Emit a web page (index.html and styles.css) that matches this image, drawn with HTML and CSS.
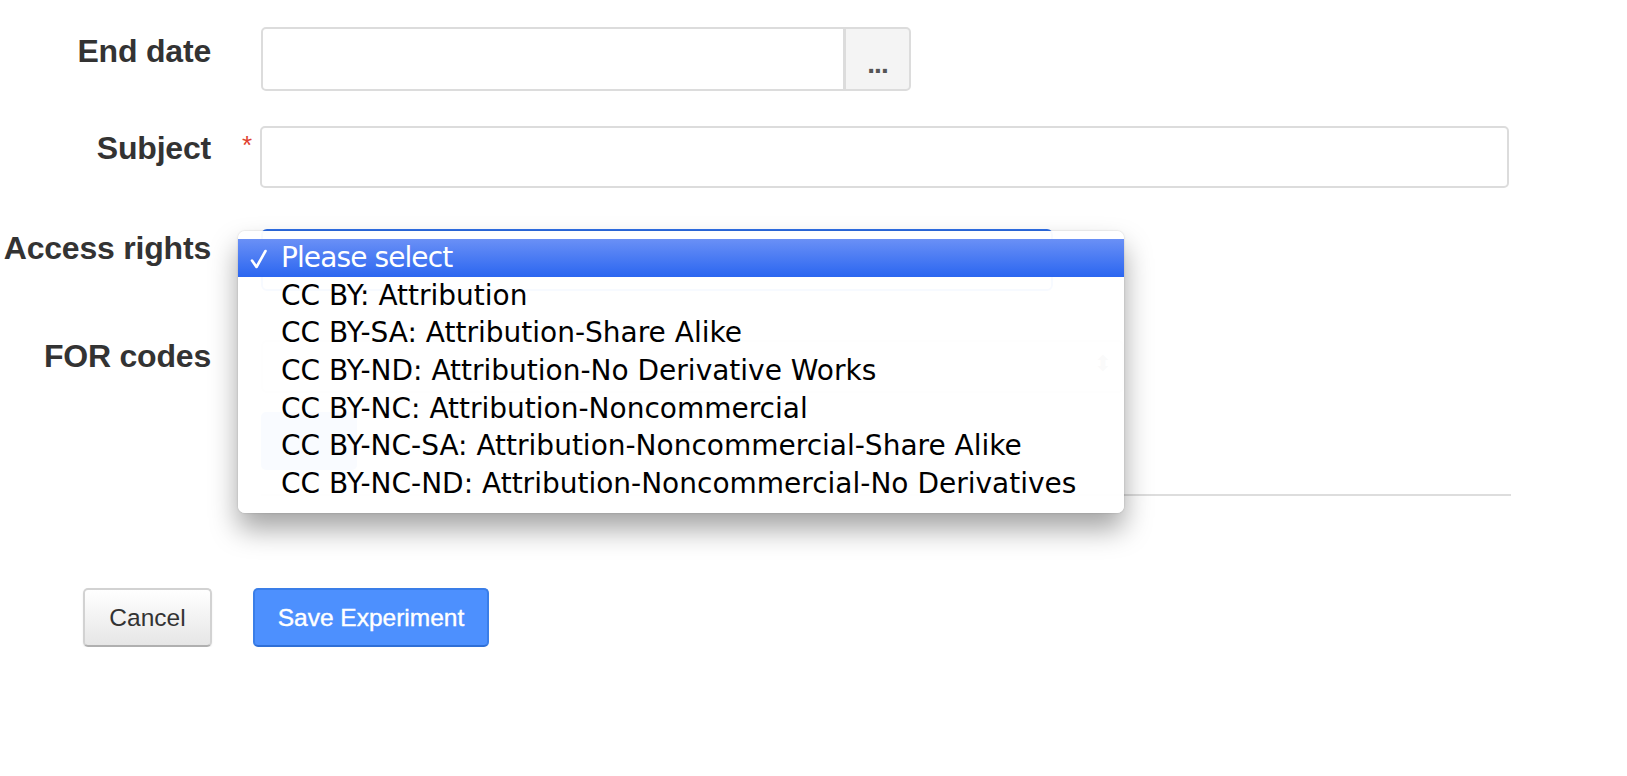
FILE: index.html
```html
<!DOCTYPE html>
<html lang="en">
<head>
<meta charset="utf-8">
<title>Experiment form</title>
<link rel="stylesheet" href="styles.css">
</head>
<body>
<form class="form">
  <div class="row row-end">
    <label class="label">End date</label>
    <span class="req"></span>
    <div class="input-group">
      <div class="input"></div>
      <span class="addon">...</span>
    </div>
  </div>

  <div class="row row-subject">
    <label class="label">Subject</label>
    <span class="req">*</span>
    <div class="input input-wide"></div>
  </div>

  <div class="row row-access">
    <label class="label">Access rights</label>
    <span class="req"></span>
    <div class="select select-focus"></div>
    <div class="menu">
      <div class="menu-item selected"><svg class="check" width="18" height="22" viewBox="0 0 18 22"><path d="M2 12.5 L6.5 19 L15.5 3" fill="none" stroke="#ffffff" stroke-width="2.6" stroke-linecap="round" stroke-linejoin="round"/></svg><span class="sel-text">Please select</span></div>
      <div class="menu-item">CC BY: Attribution</div>
      <div class="menu-item">CC BY-SA: Attribution-Share Alike</div>
      <div class="menu-item">CC BY-ND: Attribution-No Derivative Works</div>
      <div class="menu-item">CC BY-NC: Attribution-Noncommercial</div>
      <div class="menu-item">CC BY-NC-SA: Attribution-Noncommercial-Share Alike</div>
      <div class="menu-item">CC BY-NC-ND: Attribution-Noncommercial-No Derivatives</div>
    </div>
  </div>

  <div class="row row-for">
    <label class="label">FOR codes</label>
    <span class="req"></span>
    <div class="select select-for"><span class="arrows">⬍</span></div>
  </div>

  <div class="row row-add">
    <span></span>
    <span></span>
    <div class="add-btn"></div>
  </div>

  <div class="row row-rule">
    <span></span>
    <span></span>
    <div class="rule"></div>
  </div>

  <div class="actions">
    <button type="button" class="btn btn-cancel">Cancel</button>
    <button type="button" class="btn btn-save">Save Experiment</button>
  </div>
</form>
</body>
</html>
```
FILE: styles.css
```css
html, body {
  margin: 0;
  padding: 0;
  background: #ffffff;
}

body {
  font-family: "Liberation Sans", Arial, sans-serif;
  color: #333333;
}

.form {
  padding-top: 27px;
}

.row {
  display: grid;
  grid-template-columns: 211px 50px 1250px;
  align-items: start;
  position: relative;
}

.label {
  font-size: 32px;
  font-weight: bold;
  line-height: 40px;
  text-align: right;
  color: #333333;
  letter-spacing: -0.2px;
}

.req {
  color: #e0412f;
  font-size: 26px;
  line-height: 26px;
  padding-left: 31px;
  padding-top: 6px;
}

.row-end { margin-bottom: 35px; }
.row-end .label { padding-top: 4px; }

.row-subject { margin-bottom: 41px; }
.row-subject .label { padding-top: 2px; }

.row-access { margin-bottom: 49px; }
.row-access .label { margin-top: -1px; }

.row-for { margin-bottom: 19px; }
.row-for .label { margin-top: -4px; }

.row-add { margin-bottom: 24px; }

.input-group {
  display: flex;
  width: 650px;
  height: 64px;
}

.input {
  box-sizing: border-box;
  flex: 1;
  height: 64px;
  border: 2px solid #dcdcdc;
  border-radius: 5px 0 0 5px;
  background: #ffffff;
}

.input-wide {
  width: 1249px;
  height: 62px;
  margin-left: -1px;
  border-radius: 5px;
  flex: none;
}

.addon {
  box-sizing: border-box;
  width: 66px;
  height: 64px;
  border: 2px solid #dcdcdc;
  border-left: 1px solid #dcdcdc;
  border-radius: 0 5px 5px 0;
  background: #f4f4f4;
  color: #555555;
  font-size: 28px;
  font-weight: bold;
  text-align: center;
  line-height: 70px;
  letter-spacing: -1px;
}

.select {
  box-sizing: border-box;
  border-radius: 6px;
  background: #ffffff;
}

.select-focus {
  width: 792px;
  height: 62px;
  border: 2px solid #2f6fe8;
}

.select-for {
  width: 863px;
  height: 53px;
  border: 2px solid #cfcfcf;
  position: relative;
}

.arrows {
  position: absolute;
  right: 10px;
  top: 9px;
  font-family: "DejaVu Sans", sans-serif;
  font-size: 22px;
  color: #777777;
}

.add-btn {
  width: 96px;
  height: 58px;
  border-radius: 5px;
  background: #4d90fe;
}

.rule {
  width: 1250px;
  height: 2px;
  background: #dddddd;
}

.menu {
  position: absolute;
  left: 238px;
  top: 2px;
  width: 886px;
  box-sizing: border-box;
  padding: 8px 0 10px;
  background: rgba(255, 255, 255, 0.965);
  border-radius: 7px;
  box-shadow: 0 16px 28px rgba(0, 0, 0, 0.36), 0 0 2px rgba(0, 0, 0, 0.2);
  font-family: "DejaVu Sans", "Lucida Grande", sans-serif;
  font-size: 28px;
  color: #000000;
  z-index: 10;
}

.menu-item {
  height: 37.7px;
  line-height: 37.7px;
  padding-left: 43px;
  white-space: nowrap;
  position: relative;
}

.menu-item.selected {
  background: linear-gradient(#6a90f6, #2b66f0);
  color: #ffffff;
}

.sel-text {
  letter-spacing: -0.9px;
}

.check {
  position: absolute;
  left: 12px;
  top: 9px;
}

.actions {
  display: flex;
  gap: 41px;
  padding-left: 83px;
  margin-top: 92px;
}

.btn {
  box-sizing: border-box;
  height: 59px;
  border-radius: 5px;
  font-family: "Liberation Sans", Arial, sans-serif;
  font-size: 24.5px;
  padding: 0;
  cursor: pointer;
}

.btn-cancel {
  width: 129px;
  color: #333333;
  background: linear-gradient(#ffffff, #e6e6e6);
  border: 2px solid #d2d2d2;
  border-bottom-color: #b0b0b0;
  box-shadow: 0 1px 2px rgba(0, 0, 0, 0.08);
}

.btn-save {
  width: 236px;
  color: #ffffff;
  background: #4d90fe;
  border: 2px solid #3a7ee8;
  border-bottom-color: #2f6fd6;
  -webkit-text-stroke: 0.4px #ffffff;
}
```
